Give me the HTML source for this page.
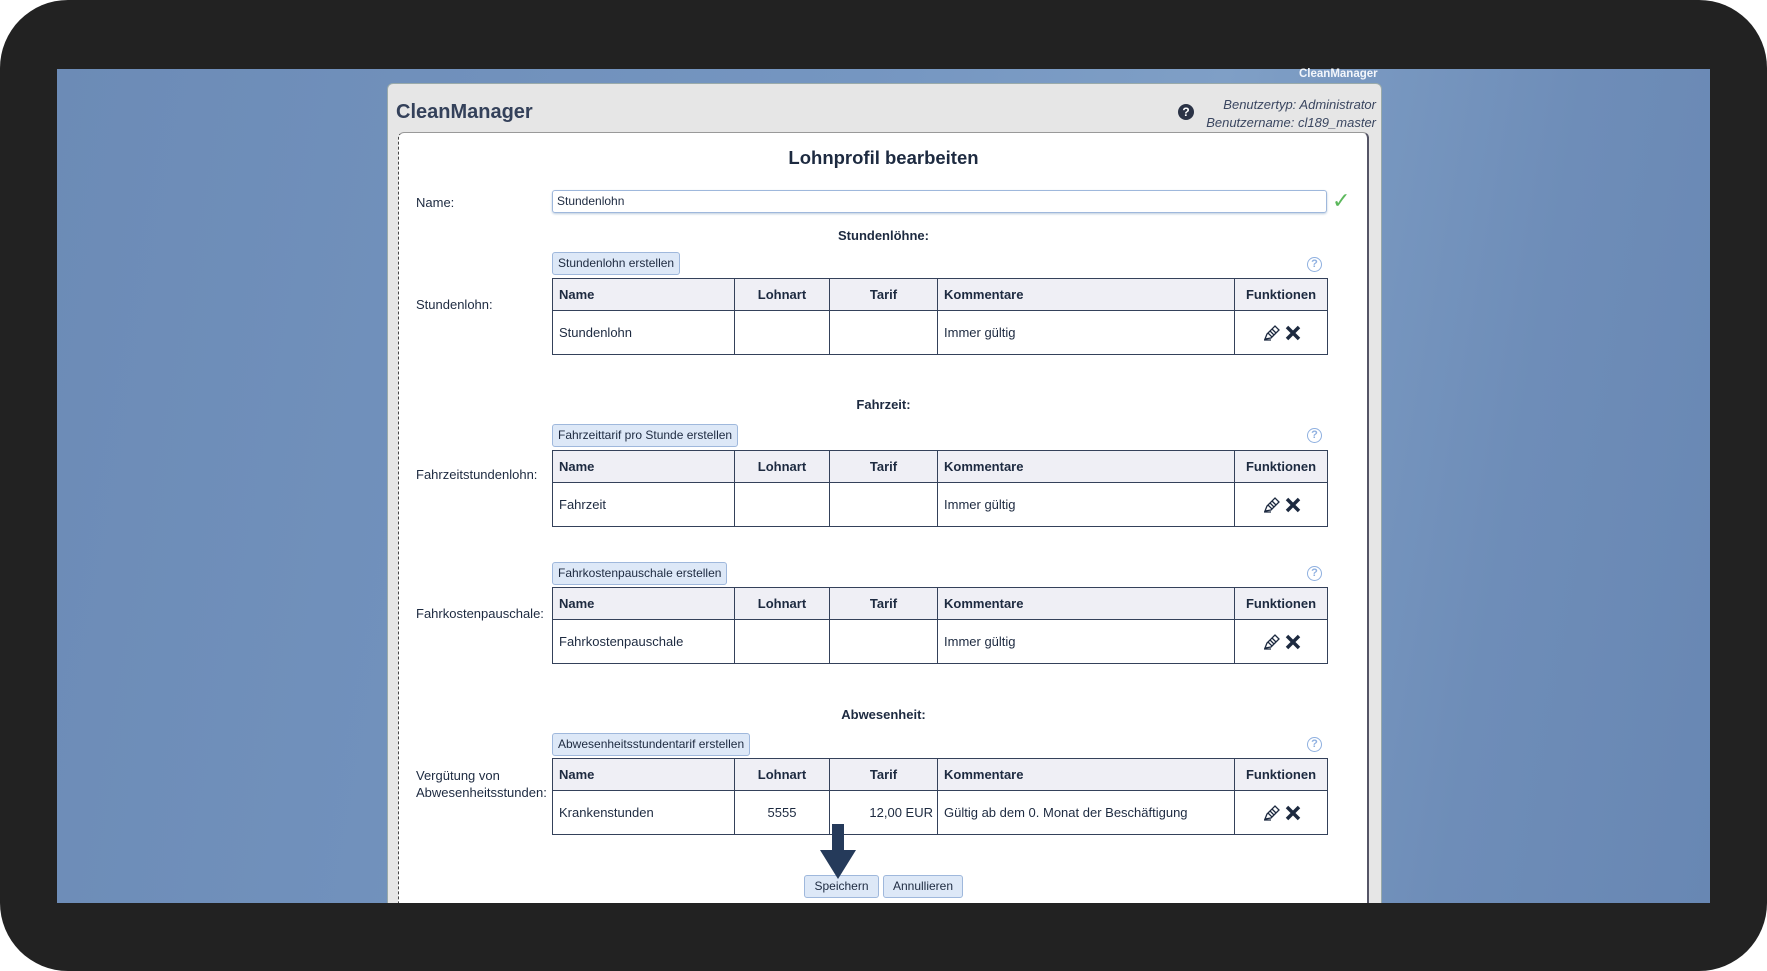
<!DOCTYPE html>
<html><head><meta charset="utf-8"><style>
*{margin:0;padding:0;box-sizing:border-box}
body{width:1767px;height:971px;background:#ffffff;position:relative;overflow:hidden;font-family:"Liberation Sans",sans-serif;color:#1d2a40}
.frame{position:absolute;left:0;top:0;width:1767px;height:971px;background:#222;border-radius:68px}
.bg{position:absolute;left:57px;top:69px;width:1653px;height:834px;background:linear-gradient(100deg,#6c8bb6 0%,#7596c1 45%,#7f9fc6 65%,#6e8db8 85%,#6887b3 100%);overflow:hidden}
.win{position:absolute;left:330px;top:14px;width:995px;height:830px;background:#e6e6e6;border:1px solid #9aa;border-radius:6px 6px 0 0}
.abs{position:absolute}
.dlg{position:absolute;left:341px;top:63px;width:971px;height:780px;background:#fff;border-left:1px dashed #444;border-right:2px solid #556;border-top:1px solid #999;border-radius:6px 6px 0 0}
.lbl{position:absolute;font-size:13px;color:#1d2a40}
.btn{position:absolute;height:23px;background:#dde8f7;border:1px solid #9fb8dc;border-radius:3px;font-size:12px;line-height:21px;padding:0 5px;color:#1d2a40;white-space:nowrap}
table{position:absolute;left:552px;width:776px;border-collapse:collapse;font-size:13px;color:#1d2a40;table-layout:fixed}
td,th{border:1.5px solid #34415a;padding:0 6px}
th{background:#efeff5;height:32px;font-weight:bold}
td{height:44px}
.help{position:absolute;width:15px;height:15px;border:1.5px solid #8fb0e0;border-radius:50%;color:#8fb0e0;font-size:11px;line-height:12px;text-align:center;font-weight:bold}
.sec{position:absolute;left:398px;width:971px;text-align:center;font-weight:bold;font-size:13px}
.ic{display:inline-block;vertical-align:middle}
</style></head><body>
<div class="frame"></div>
<div class="bg">
<div class="win"></div>
<div class="dlg"></div>
</div>
<div class="abs" style="left:1299px;top:68px;font-size:11.5px;color:#f3f6fb;font-weight:bold">CleanManager</div>
<div class="abs" style="left:396px;top:101px;font-size:20px;font-weight:bold;color:#34415a">CleanManager</div>
<div class="abs" style="left:1178px;top:104px;width:16px;height:16px;border-radius:50%;background:#2b3346;color:#fff;font-size:12px;font-weight:bold;text-align:center;line-height:16px">?</div>
<div class="abs" style="right:391px;top:96px;font-size:13px;font-style:italic;color:#3a4660;text-align:right;line-height:18px">Benutzertyp: Administrator<br>Benutzername: cl189_master</div>
<div class="abs" style="left:398px;width:971px;top:147px;text-align:center;font-size:18.5px;font-weight:bold">Lohnprofil bearbeiten</div>

<div class="lbl" style="left:416px;top:195px">Name:</div>
<div class="abs" style="left:552px;top:190px;width:775px;height:23px;border:1px solid #9fb8dc;border-radius:3px;font-size:12px;line-height:21px;padding-left:4px;box-shadow:0 1px 2px #bcd">Stundenlohn</div>
<div class="abs" style="left:1332px;top:188px;color:#5cb85c;font-size:22px">✓</div>

<div class="sec" style="top:228px">Stundenlöhne:</div>
<div class="btn" style="left:552px;top:252px">Stundenlohn erstellen</div>
<div class="help" style="left:1307px;top:257px">?</div>
<div class="lbl" style="left:416px;top:297px">Stundenlohn:</div>
<table style="top:278px"><tr><th style="text-align:left;width:182px">Name</th><th style="width:95px">Lohnart</th><th style="width:108px">Tarif</th><th style="text-align:left;width:297px">Kommentare</th><th>Funktionen</th></tr>
<tr><td>Stundenlohn</td><td></td><td></td><td>Immer gültig</td><td style="text-align:center"><svg class="ic" width="20" height="18"><path d="M3 16H10M4 15L6 10L14 2L18 6L10 14Z M7 9L11 13 M9 7L13 11 M11 5L15 9" stroke="#1d2a40" stroke-width="1.3" fill="none"/></svg> <svg class="ic" width="16" height="16"><path d="M2 2L14 14M14 2L2 14" stroke="#1d2a40" stroke-width="3.5"/></svg></td></tr></table>

<div class="sec" style="top:397px">Fahrzeit:</div>
<div class="btn" style="left:552px;top:424px">Fahrzeittarif pro Stunde erstellen</div>
<div class="help" style="left:1307px;top:428px">?</div>
<div class="lbl" style="left:416px;top:467px">Fahrzeitstundenlohn:</div>
<table style="top:450px"><tr><th style="text-align:left;width:182px">Name</th><th style="width:95px">Lohnart</th><th style="width:108px">Tarif</th><th style="text-align:left;width:297px">Kommentare</th><th>Funktionen</th></tr>
<tr><td>Fahrzeit</td><td></td><td></td><td>Immer gültig</td><td style="text-align:center"><svg class="ic" width="20" height="18"><path d="M3 16H10M4 15L6 10L14 2L18 6L10 14Z M7 9L11 13 M9 7L13 11 M11 5L15 9" stroke="#1d2a40" stroke-width="1.3" fill="none"/></svg> <svg class="ic" width="16" height="16"><path d="M2 2L14 14M14 2L2 14" stroke="#1d2a40" stroke-width="3.5"/></svg></td></tr></table>

<div class="btn" style="left:552px;top:562px">Fahrkostenpauschale erstellen</div>
<div class="help" style="left:1307px;top:566px">?</div>
<div class="lbl" style="left:416px;top:606px">Fahrkostenpauschale:</div>
<table style="top:587px"><tr><th style="text-align:left;width:182px">Name</th><th style="width:95px">Lohnart</th><th style="width:108px">Tarif</th><th style="text-align:left;width:297px">Kommentare</th><th>Funktionen</th></tr>
<tr><td>Fahrkostenpauschale</td><td></td><td></td><td>Immer gültig</td><td style="text-align:center"><svg class="ic" width="20" height="18"><path d="M3 16H10M4 15L6 10L14 2L18 6L10 14Z M7 9L11 13 M9 7L13 11 M11 5L15 9" stroke="#1d2a40" stroke-width="1.3" fill="none"/></svg> <svg class="ic" width="16" height="16"><path d="M2 2L14 14M14 2L2 14" stroke="#1d2a40" stroke-width="3.5"/></svg></td></tr></table>

<div class="sec" style="top:707px">Abwesenheit:</div>
<div class="btn" style="left:552px;top:733px">Abwesenheitsstundentarif erstellen</div>
<div class="help" style="left:1307px;top:737px">?</div>
<div class="lbl" style="left:416px;top:767px;line-height:17px">Vergütung von<br>Abwesenheitsstunden:</div>
<table style="top:758px"><tr><th style="text-align:left;width:182px">Name</th><th style="width:95px">Lohnart</th><th style="width:108px">Tarif</th><th style="text-align:left;width:297px">Kommentare</th><th>Funktionen</th></tr>
<tr><td>Krankenstunden</td><td style="text-align:center">5555</td><td style="text-align:right;padding-right:4px">12,00 EUR</td><td>Gültig ab dem 0. Monat der Beschäftigung</td><td style="text-align:center"><svg class="ic" width="20" height="18"><path d="M3 16H10M4 15L6 10L14 2L18 6L10 14Z M7 9L11 13 M9 7L13 11 M11 5L15 9" stroke="#1d2a40" stroke-width="1.3" fill="none"/></svg> <svg class="ic" width="16" height="16"><path d="M2 2L14 14M14 2L2 14" stroke="#1d2a40" stroke-width="3.5"/></svg></td></tr></table>

<div class="btn" style="left:804px;top:875px;width:75px;text-align:center">Speichern</div>
<div class="btn" style="left:883px;top:875px;width:80px;text-align:center">Annullieren</div>
<svg class="abs" style="left:816px;top:824px" width="50" height="56"><path d="M16 0H28V26H40L22 55L4 26H16Z" fill="#253a5a"/></svg>
</body></html>
